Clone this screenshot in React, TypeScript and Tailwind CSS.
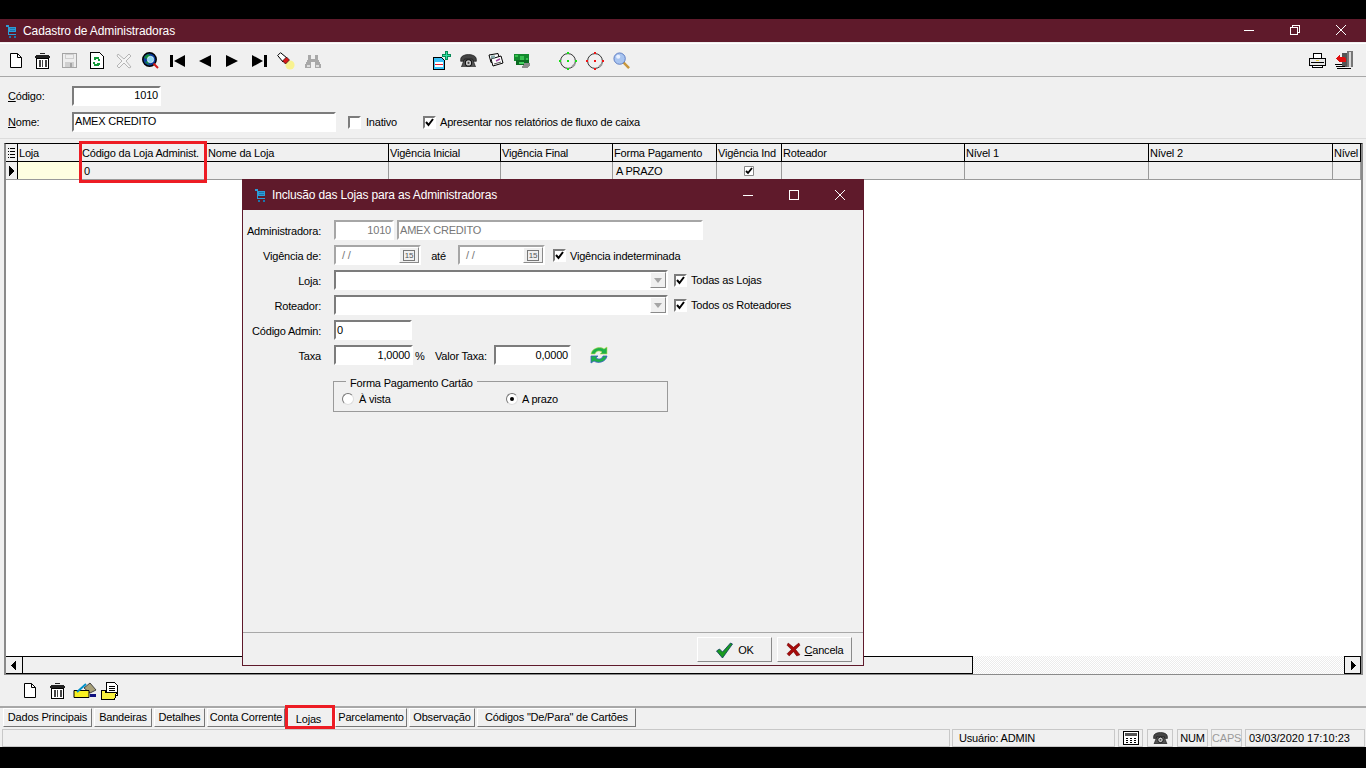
import type { ReactNode } from "react";

const sunken = "border-2 border-t-[#7c7c7c] border-l-[#7c7c7c] border-r-white border-b-white bg-white";
const sunkenOff = "border-2 border-t-[#a6a6a6] border-l-[#a6a6a6] border-r-white border-b-white bg-white";
const raised = "border border-t-white border-l-white border-r-[#8a8a8a] border-b-[#8a8a8a] bg-[#f0f0f0]";

function Px({ w = 20, h = 20, children }: { w?: number; h?: number; children: ReactNode }) {
  return (
    <svg width={w} height={h} viewBox={`0 0 ${w} ${h}`} shapeRendering="crispEdges">
      {children}
    </svg>
  );
}

function Cart() {
  return (
    <Px w={12} h={14}>
      <path d="M1 1h3v2h7v5H4v2h7v1H3V3H1z" fill="#2e9bd6" />
      <path d="M5 4h5v1H5zM5 6h5v1H5z" fill="#1b76ad" />
      <path d="M4 12h2v2H4zM9 12h2v2H9z" fill="#1b76ad" />
    </Px>
  );
}

function NewDoc() {
  return (
    <svg width="12" height="15" viewBox="0 0 12 15">
      <path d="M0.5 0.5h7l4 4v10h-11z" fill="#fff" stroke="#000" />
      <path d="M7.5 0.5v4h4" fill="none" stroke="#000" />
    </svg>
  );
}

function Trash() {
  return (
    <Px w={15} h={16}>
      <path d="M5 0h5v1H5zM1 2h13v1H1zM0 3h15v2H0z" fill="#222" />
      <path d="M1.5 5.5h12v10h-12z" fill="#fff" stroke="#000" />
      <path d="M4 7h2v7H4zM7 7h1v7H7zM10 7h2v7h-2z" fill="#444" />
    </Px>
  );
}

function Save() {
  return (
    <Px w={15} h={15}>
      <path d="M0.5 0.5h14v14h-14z" fill="#eee" stroke="#a5a5a5" />
      <path d="M3 1h9v5H3zM3 9h9v5H3z" fill="#cfcfcf" />
      <path d="M4 2h7v3H4z" fill="#eee" />
      <path d="M8 10h2v4H8z" fill="#a5a5a5" />
    </Px>
  );
}

function Reload() {
  return (
    <Px w={14} h={17}>
      <path d="M0.5 0.5h9l4 4v12h-13z" fill="#fff" stroke="#000" />
      <path d="M4 5h5v2h1v2H8V7H6v1H4zM3 10h2v2h2v-1h3v2H9v1H4v-2H3z" fill="#149a3a" />
    </Px>
  );
}

function CrossOff() {
  return (
    <svg width="16" height="16" viewBox="0 0 16 16">
      <path d="M2 1l6 5 5-5 2 2-5 5 5 6-2 1-5-5-5 5-2-2 5-5-5-5z" fill="#f4f4f4" stroke="#b5b5b5" />
    </svg>
  );
}

function Globe() {
  return (
    <svg width="17" height="17" viewBox="0 0 17 17">
      <circle cx="7.5" cy="7.5" r="6.7" fill="#0b3c9c" stroke="#000" strokeWidth="1.5" />
      <path d="M2 5l4-3 3 2-2 2-3 1zM3 10l3-1 1 4z" fill="#148a3c" />
      <circle cx="8.5" cy="7.5" r="3.2" fill="#8fd8f0" stroke="#fff" strokeWidth="0.6" />
      <path d="M11.5 11.5l4.5 4.5" stroke="#d01818" strokeWidth="2" />
    </svg>
  );
}

function Nav({ dir, bar }: { dir: "l" | "r"; bar?: boolean }) {
  if (dir === "l") {
    return (
      <svg width="16" height="12" viewBox="0 0 16 12">
        {bar && <path d="M0 0h3v12H0z" fill="#000" />}
        <path d={bar ? "M15 0v12L4 6z" : "M14 0v12L2 6z"} fill="#000" />
      </svg>
    );
  }
  return (
    <svg width="16" height="12" viewBox="0 0 16 12">
      <path d={bar ? "M1 0v12l11-6z" : "M2 0v12l12-6z"} fill="#000" />
      {bar && <path d="M13 0h3v12h-3z" fill="#000" />}
    </svg>
  );
}

function Flashlight() {
  return (
    <svg width="18" height="18" viewBox="0 0 18 18">
      <circle cx="13" cy="13" r="4.6" fill="#f8f290" />
      <path d="M0.7 3.5L3.5 0.7 10 6 6 10z" fill="#fff" stroke="#000" />
      <path d="M9.5 5l3 3-4 4-3-3z" fill="#d81818" stroke="#000" strokeWidth="0.6" />
    </svg>
  );
}

function Binoculars() {
  return (
    <Px w={16} h={14}>
      <path d="M3 1h3v4h4V1h3v4l3 6v3h-6V8H6v6H0v-3l3-6z" fill="#a8a8a8" />
      <path d="M2 11h3v2H2zM11 11h3v2h-3z" fill="#dcdcdc" />
    </Px>
  );
}

function DocPlus() {
  return (
    <Px w={19} h={19}>
      <path d="M1.5 6.5h8l3 3v9h-11z" fill="#39c0f6" stroke="#000" />
      <path d="M3 11h8v5H3z" fill="#fff" />
      <path d="M3 13h8v1H3z" fill="#e81c2c" />
      <path d="M13 0h3v3h3v3h-3v3h-3V6h-3V3h3z" fill="#0a8a58" />
      <path d="M14 1h1v3h3v1h-3v3h-1V5h-3V4h3z" fill="#30e0a0" />
    </Px>
  );
}

function Phone({ w = 17 }: { w?: number }) {
  return (
    <svg width={w} height={w * 0.8} viewBox="0 0 16 13">
      <path d="M0.5 5c0-6 15-6 15 0v2h-4V5h-7v2h-4z" fill="#444" stroke="#111" strokeWidth="0.6" />
      <path d="M4 5h8l3 8H1z" fill="#555" stroke="#111" strokeWidth="0.6" />
      <circle cx="8" cy="8.5" r="3" fill="#ccc" stroke="#111" strokeWidth="1" />
      <circle cx="8" cy="8.5" r="1" fill="#444" />
    </svg>
  );
}

function Cards() {
  return (
    <svg width="16" height="15" viewBox="0 0 16 15">
      <path d="M1 2l9-1.500 2 7-9 2z" fill="#fff" stroke="#000" />
      <path d="M3 6l10-3 2 7-10 3z" fill="#fff" stroke="#000" />
      <path d="M3 2.500h4v3H3z" fill="#8aa" />
      <path d="M8 8l4-2" stroke="#a044a0" strokeWidth="1.4" />
      <path d="M6 11l7-2" stroke="#555" />
    </svg>
  );
}

function Money() {
  return (
    <Px w={17} h={14}>
      <path d="M0 0h15v7H0z" fill="#138a2e" />
      <path d="M1 1h3v2H1zM6 2h4v4H6zM12 4h2v2h-2z" fill="#38c050" />
      <path d="M2 6h13v5H2z" fill="#0b6a22" />
      <path d="M5 8h5v2H5z" fill="#46d060" />
      <path d="M10 9h6v2l-3 3H8v-2l2-1z" fill="#8c8c8c" />
    </Px>
  );
}

function Target({ color }: { color: string }) {
  return (
    <svg width="18" height="18" viewBox="0 0 18 18">
      <circle cx="9" cy="9" r="7.4" fill="none" stroke="#333" />
      <path d="M13 15l3-3" stroke="#999" strokeWidth="2" />
      <g fill={color}>
        <rect x="8" y="0" width="2" height="2" />
        <rect x="8" y="16" width="2" height="2" />
        <rect x="0" y="8" width="2" height="2" />
        <rect x="16" y="8" width="2" height="2" />
        <rect x="8" y="8" width="2" height="2" />
      </g>
    </svg>
  );
}

function Magnifier() {
  return (
    <svg width="17" height="17" viewBox="0 0 18 18">
      <path d="M11 11l6 6" stroke="#c8963c" strokeWidth="2.6" />
      <circle cx="7" cy="7" r="6" fill="#a8c4f0" stroke="#5878c0" />
      <circle cx="5.500" cy="5" r="2.200" fill="#e8f0ff" />
    </svg>
  );
}

function Printer() {
  return (
    <Px w={17} h={15}>
      <path d="M4.500 0.500h8v5h-8z" fill="#fff" stroke="#000" />
      <path d="M0.500 5.500h16v7h-16z" fill="#e8e8e8" stroke="#000" />
      <path d="M2 9h13v1H2z" fill="#000" />
      <path d="M7 7h3v1H7z" fill="#e8d040" />
      <path d="M3.500 12.500h10v2h-10z" fill="#fff" stroke="#000" />
    </Px>
  );
}

function ExitDoor() {
  return (
    <Px w={19} h={19}>
      <path d="M7 2h11v14H7z" fill="#555" />
      <path d="M12 0h6v16h-6z" fill="#777" />
      <path d="M14 1h2v15h-2z" fill="#d8d8d8" />
      <path d="M1 7l4-3v2h4l2 2v3H5v1z" fill="#e01010" />
      <path d="M0 13h7v1H0zM1 15h9v1H1zM2 17h14v1H2z" fill="#000" />
    </Px>
  );
}

function Refresh() {
  return (
    <svg width="18" height="18" viewBox="0 0 18 18">
      <path d="M1 8C2 2 10 0 14 3l3-2v7h-7l2-2C9 4 6 5 5 8z" fill="#1eb04a" stroke="#b8e04a" strokeWidth="0.6" />
      <path d="M17 10c-1 6-9 8-13 5l-3 2v-7h7l-2 2c3 2 6 1 7-2z" fill="#1eb04a" stroke="#3c5cc8" strokeWidth="0.8" />
    </svg>
  );
}

function Notes() {
  return (
    <svg width="24" height="17" viewBox="0 0 24 17">
      <path d="M11 6l6-5 6 7-6 3z" fill="#a8a078" stroke="#444" />
      <path d="M1 8.500h15v7H1z" fill="#f8f020" stroke="#000" />
      <path d="M4 10L13 2" stroke="#0090c8" strokeWidth="2" />
      <path d="M17 12h6v3h-6z" fill="#101080" />
    </svg>
  );
}

function FolderDoc() {
  return (
    <svg width="18" height="18" viewBox="0 0 18 18" shapeRendering="crispEdges">
      <path d="M5.500 0.500h8l3 3v10h-11z" fill="#fff" stroke="#000" />
      <path d="M8 4h6v1H8zM8 6h6v1H8zM8 8h6v1H8z" fill="#000" />
      <path d="M0.500 8.500h4v2h11l-2 7h-13z" fill="#f8f040" stroke="#000" />
    </svg>
  );
}

function Calc() {
  return (
    <Px w={16} h={14}>
      <path d="M0.500 0.500h15v13h-15z" fill="#fff" stroke="#000" />
      <path d="M2 2h12v3H2z" fill="#555" />
      <path d="M3 7h2v1H3zM7 7h2v1H7zM11 7h2v1h-2zM3 9h2v1H3zM7 9h2v1H7zM11 9h2v1h-2zM3 11h2v1H3zM7 11h2v1H7zM11 11h2v1h-2z" fill="#000" />
    </Px>
  );
}

function Check({ on = true, size = 13 }: { on?: boolean; size?: number }) {
  return (
    <span className={`${sunken} flex shrink-0 items-center justify-center`} style={{ width: size, height: size }}>
      {on && (
        <svg width="9" height="9" viewBox="0 0 9 9">
          <path d="M1 4l2.500 3L8 1" fill="none" stroke="#000" strokeWidth="2" />
        </svg>
      )}
    </span>
  );
}

function Radio({ on }: { on?: boolean }) {
  return (
    <span className="flex h-3 w-3 shrink-0 items-center justify-center rounded-full border border-t-[#777] border-l-[#777] border-r-[#ddd] border-b-[#ddd] bg-white">
      {on && <span className="h-1 w-1 rounded-full bg-black" />}
    </span>
  );
}

function Slot({ children }: { children: ReactNode }) {
  return <span className="flex h-full w-[27px] shrink-0 items-center justify-center">{children}</span>;
}

function WinButton({ kind }: { kind: "min" | "max" | "restore" | "close" }) {
  return (
    <span className="flex h-full w-[46px] items-center justify-center">
      <svg width="12" height="12" viewBox="0 0 12 12" fill="none" stroke="#fff" shapeRendering={kind === "close" ? "auto" : "crispEdges"}>
        {kind === "min" && <path d="M1 6.500h10" />}
        {kind === "max" && <path d="M1.500 1.500h9v9h-9z" />}
        {kind === "restore" && <path d="M1.500 3.500h7v7h-7zM3.500 3.500v-2h7v7h-2" />}
        {kind === "close" && <path d="M1 1l10 10M11 1L1 11" />}
      </svg>
    </span>
  );
}

const columns = [
  { label: "Loja", w: "w-[63px]", cell: "bg-[#ffffe1]", value: "" },
  { label: "Código da Loja Administ.", w: "w-[126px]", cell: "", value: "0" },
  { label: "Nome da Loja", w: "w-[182px]", cell: "", value: "" },
  { label: "Vigência Inicial", w: "w-[112px]", cell: "", value: "" },
  { label: "Vigência Final", w: "w-[112px]", cell: "", value: "" },
  { label: "Forma Pagamento", w: "w-[104px]", cell: "", value: "A PRAZO" },
  { label: "Vigência Ind", w: "w-[65px]", cell: "", value: "check" },
  { label: "Roteador", w: "w-[183px]", cell: "", value: "" },
  { label: "Nível 1", w: "w-[184px]", cell: "", value: "" },
  { label: "Nível 2", w: "w-[184px]", cell: "", value: "" },
  { label: "Nível", w: "w-[28px]", cell: "", value: "" },
];

const tabs = [
  { label: "Dados Principais", w: "w-[89px]" },
  { label: "Bandeiras", w: "w-[58px]" },
  { label: "Detalhes", w: "w-[51px]" },
  { label: "Conta Corrente", w: "w-[78px]" },
  { label: "Lojas", w: "w-[46px]", active: true },
  { label: "Parcelamento", w: "w-[72px]" },
  { label: "Observação", w: "w-[66px]" },
  { label: 'Códigos "De/Para" de Cartões', w: "w-[159px]" },
];

function Grid() {
  return (
    <div className="ml-[4px] mr-[3px] mt-[4px] flex h-[532px] shrink-0 flex-col border-x-2 border-t border-b border-t-black border-l-[#8a8a8a] border-r-[#8a8a8a] border-b-[#8a8a8a] bg-white">
      <div className="flex h-[18px] shrink-0 overflow-hidden border-b border-black bg-[#f0f0f0]">
        <span className="flex w-[12px] shrink-0 items-center justify-center border-r border-black">
          <svg width="7" height="11" viewBox="0 0 7 11" shapeRendering="crispEdges">
            <path d="M0 1h1v1H0zM2 1h5v1H2zM0 4h1v1H0zM2 4h5v1H2zM0 7h1v1H0zM2 7h5v1H2zM0 10h1v1H0zM2 10h5v1H2z" fill="#000" />
          </svg>
        </span>
        {columns.map((c) => (
          <span key={c.label} className={`${c.w} shrink-0 overflow-hidden whitespace-nowrap border-r border-black pl-[1px] pt-[1px] leading-[17px]`}>
            {c.label}
          </span>
        ))}
      </div>
      <div className="flex h-[18px] shrink-0 overflow-hidden border-b border-[#9a9a9a] bg-[#f0f0f0]">
        <span className="flex w-[12px] shrink-0 items-center justify-center border-r border-black">
          <svg width="6" height="10" viewBox="0 0 6 10" shapeRendering="crispEdges">
            <path d="M0 0l6 5-6 5z" fill="#000" />
          </svg>
        </span>
        {columns.map((c) => (
          <span key={c.label} className={`${c.w} ${c.cell} flex shrink-0 items-center border-r border-[#9a9a9a] pl-[3px] pt-[1px]`}>
            {c.value === "check" ? (
              <span className="flex w-full justify-center pr-[3px]">
                <svg width="10" height="10" viewBox="0 0 10 10">
                  <path d="M0.500 0.500h9v9h-9z" fill="#fff" stroke="#8a8a8a" />
                  <path d="M2 5l2 2 4-5" fill="none" stroke="#000" strokeWidth="1.800" />
                </svg>
              </span>
            ) : (
              c.value
            )}
          </span>
        ))}
      </div>
      <div className="flex-1" />
      <div className="flex h-[18px] shrink-0 bg-[repeating-conic-gradient(#ececec_0_25%,#ffffff_0_50%)] bg-[length:2px_2px]">
        <span className="flex w-[17px] items-center justify-center border-y border-r border-black bg-[#f0f0f0]">
          <svg width="6" height="9" viewBox="0 0 6 9" shapeRendering="crispEdges">
            <path d="M5 0v9L0 4.500z" fill="#000" />
          </svg>
        </span>
        <span className="w-[950px] border-y border-r border-black bg-[#f0f0f0]" />
        <span className="flex-1" />
        <span className="flex w-[17px] items-center justify-center border border-black bg-[#f0f0f0]">
          <svg width="6" height="9" viewBox="0 0 6 9" shapeRendering="crispEdges">
            <path d="M1 0v9l5-4.500z" fill="#000" />
          </svg>
        </span>
      </div>
    </div>
  );
}

function DialogRow({ label, children }: { label: string; children: ReactNode }) {
  return (
    <div className="flex h-[20px] items-center">
      <span className="w-[78px] shrink-0 whitespace-nowrap pt-[2px] text-right">{label}</span>
      <span className="w-[13px] shrink-0" />
      {children}
    </div>
  );
}

function DateInput() {
  return (
    <span className={`${sunkenOff} flex h-[20px] w-[87px] shrink-0 items-center justify-between pl-[6px] text-[#777]`}>
      <span>/ /</span>
      <span className={`${raised} flex h-[16px] w-[20px] items-center justify-center`}>
        <span className="border border-[#777] px-[1px] text-[8px] leading-[9px] text-[#555]">15</span>
      </span>
    </span>
  );
}

function Combo() {
  return (
    <span className={`${sunken} flex h-[20px] w-[334px] shrink-0 justify-end`}>
      <span className={`${raised} flex w-[16px] items-center justify-center`}>
        <svg width="8" height="5" viewBox="0 0 8 5">
          <path d="M0 0h8L4 5z" fill="#a5a5a5" />
        </svg>
      </span>
    </span>
  );
}

function Dialog() {
  return (
    <div className="absolute left-[242px] top-[179px] flex h-[487px] w-[622px] flex-col border border-[#5f1a2b] bg-[#f0f0f0]">
      <div className="flex h-[30px] shrink-0 items-center bg-[#5f1a2b] pl-[11px] text-[12px] tracking-[-0.17px] text-white">
        <Cart />
        <span className="ml-[6px]">Inclusão das Lojas para as Administradoras</span>
        <span className="ml-auto flex h-full items-center">
          <WinButton kind="min" />
          <WinButton kind="max" />
          <WinButton kind="close" />
        </span>
      </div>
      <div className="flex flex-1 flex-col pt-[10px]">
        <div className="flex flex-col gap-[5px]">
          <DialogRow label="Administradora:">
            <span className={`${sunkenOff} h-[20px] w-[60px] pr-[1px] text-right leading-[16px] text-[#777]`}>1010</span>
            <span className={`${sunkenOff} ml-[3px] h-[20px] w-[306px] pl-[1px] leading-[16px] text-[#777]`}>AMEX CREDITO</span>
          </DialogRow>
          <DialogRow label="Vigência de:">
            <DateInput />
            <span className="w-[37px] pt-[2px] pr-[2px] text-center">até</span>
            <DateInput />
            <span className="ml-[8px]">
              <Check />
            </span>
            <span className="ml-[4px] pt-[2px]">Vigência indeterminada</span>
          </DialogRow>
          <DialogRow label="Loja:">
            <Combo />
            <span className="ml-[6px]">
              <Check />
            </span>
            <span className="ml-[4px] pt-[1px]">Todas as Lojas</span>
          </DialogRow>
          <DialogRow label="Roteador:">
            <Combo />
            <span className="ml-[6px]">
              <Check />
            </span>
            <span className="ml-[4px] pt-[1px]">Todos os Roteadores</span>
          </DialogRow>
          <DialogRow label="Código Admin:">
            <span className={`${sunken} h-[20px] w-[78px] pl-[1px] leading-[16px]`}>0</span>
          </DialogRow>
          <DialogRow label="Taxa">
            <span className={`${sunken} h-[20px] w-[79px] pr-[1px] text-right leading-[16px]`}>1,0000</span>
            <span className="ml-[2px] w-[20px] pt-[2px]">%</span>
            <span className="w-[59px] whitespace-nowrap pt-[2px]">Valor Taxa:</span>
            <span className={`${sunken} h-[20px] w-[77px] pr-[1px] text-right leading-[16px]`}>0,0000</span>
            <span className="ml-[19px]">
              <Refresh />
            </span>
          </DialogRow>
        </div>
        <div className="relative ml-[90px] mt-[16px] flex h-[31px] w-[335px] items-end border border-[#9a9a9a] pb-[4px] pl-[8px]">
          <span className="absolute left-[12px] top-[-6px] bg-[#f0f0f0] px-[4px] leading-[14px]">Forma Pagamento Cartão</span>
          <span className="flex w-[164px] items-center gap-[5px]">
            <Radio />À vista
          </span>
          <span className="flex items-center gap-[4px]">
            <Radio on />A prazo
          </span>
        </div>
      </div>
      <div className="flex h-[33px] shrink-0 items-start justify-end gap-[5px] border-t border-[#a8a8a8] pr-[11px] pt-[4px]">
        <button className={`${raised} flex h-[25px] w-[75px] items-center justify-center gap-[4px]`}>
          <svg width="19" height="16" viewBox="0 0 18 16">
            <path d="M1 9l3-2 3 3 8-9 2 1-10 14z" fill="#1a9a20" stroke="#0a3a60" strokeWidth="0.800" />
          </svg>
          <span className="pt-[1px]">OK</span>
        </button>
        <button className={`${raised} flex h-[25px] w-[75px] items-center justify-center gap-[4px]`}>
          <svg width="15" height="15" viewBox="0 0 14 14">
            <path d="M2 1l5 4 5-4 1 2-4 4 4 5-3 1-3-4-4 4-2-2 4-4-4-4z" fill="#a80c0c" stroke="#600" strokeWidth="0.500" />
          </svg>
          <span className="pt-[1px]">
            <span className="underline">C</span>ancela
          </span>
        </button>
      </div>
    </div>
  );
}

export default function App() {
  return (
    <div className="relative h-[768px] w-[1366px] overflow-hidden bg-black pt-[19px] font-['Liberation_Sans',sans-serif] text-[11px] tracking-[-0.2px] text-black">
      <div className="flex h-[728px] flex-col bg-[#f0f0f0]">
        <div className="flex h-[23px] shrink-0 items-center bg-[#5f1a2b] pl-[5px] text-[12px] tracking-[-0.1px] text-white">
          <Cart />
          <span className="ml-[6px] pt-[1px]">Cadastro de Administradoras</span>
          <span className="ml-auto flex h-full items-center pb-[2px] pr-[2px]">
            <WinButton kind="min" />
            <WinButton kind="restore" />
            <WinButton kind="close" />
          </span>
        </div>

        <div className="mt-[1px] flex h-[34px] shrink-0 items-center border-y border-t-white border-b-[#a8a8a8] pl-[2px] pr-[8px] pt-[1px]">
          <Slot><NewDoc /></Slot>
          <Slot><Trash /></Slot>
          <Slot><Save /></Slot>
          <Slot><Reload /></Slot>
          <Slot><CrossOff /></Slot>
          <Slot><Globe /></Slot>
          <Slot><Nav dir="l" bar /></Slot>
          <Slot><Nav dir="l" /></Slot>
          <Slot><Nav dir="r" /></Slot>
          <Slot><Nav dir="r" bar /></Slot>
          <Slot><Flashlight /></Slot>
          <Slot><Binoculars /></Slot>
          <span className="w-[102px] shrink-0" />
          <Slot><DocPlus /></Slot>
          <Slot><Phone /></Slot>
          <Slot><Cards /></Slot>
          <Slot><Money /></Slot>
          <span className="w-[18px] shrink-0" />
          <Slot><Target color="#14e014" /></Slot>
          <Slot><Target color="#f01414" /></Slot>
          <Slot><Magnifier /></Slot>
          <span className="ml-auto flex h-full items-center">
            <Slot><Printer /></Slot>
            <Slot><ExitDoor /></Slot>
          </span>
        </div>

        <div className="flex h-[62px] shrink-0 flex-col gap-[6px] border-b border-[#dcdcdc] pl-[8px] pt-[9px]">
          <div className="flex h-[20px] items-center">
            <span className="w-[64px]">
              <span className="underline">C</span>ódigo:
            </span>
            <span className={`${sunken} h-[20px] w-[89px] pr-[1px] text-right leading-[14px]`}>1010</span>
          </div>
          <div className="flex h-[20px] items-center">
            <span className="w-[64px]">
              <span className="underline">N</span>ome:
            </span>
            <span className={`${sunken} h-[20px] w-[264px] pl-[1px] leading-[14px]`}>AMEX CREDITO</span>
            <span className="ml-[12px]">
              <Check on={false} />
            </span>
            <span className="ml-[5px] w-[57px]">Inativo</span>
            <Check />
            <span className="ml-[4px]">Apresentar nos relatórios de fluxo de caixa</span>
          </div>
        </div>

        <Grid />

        <div className="flex h-[31px] shrink-0 items-center pl-[16px]">
          <Slot><NewDoc /></Slot>
          <span className="flex w-[29px] justify-center"><Trash /></span>
          <span className="flex w-[25px] justify-center"><Notes /></span>
          <span className="flex w-[26px] justify-center"><FolderDoc /></span>
        </div>

        <div className="flex h-[23px] shrink-0 items-start gap-[2px] border-t-2 border-t-[#a8a8a8] pl-[3px]">
          {tabs.map((t) => (
            <span
              key={t.label}
              className={`${t.w} h-[19px] shrink-0 whitespace-nowrap text-center ${
                t.active
                  ? "pt-[3px] pr-[3px] leading-[16px]"
                  : "border border-t-white border-l-white border-r-[#777] border-b-[#777] leading-[16px]"
              }`}
            >
              {t.label}
            </span>
          ))}
        </div>

        <div className="flex h-[18px] shrink-0 pl-[2px]">
          <span className="w-[948px] border border-[#c8c8c8]" />
          <span className="ml-[2px] w-[163px] border border-[#c8c8c8] pl-[6px] leading-[16px]">Usuário: ADMIN</span>
          <span className="ml-[3px] flex w-[25px] items-center justify-center border border-[#c8c8c8]"><Calc /></span>
          <span className="ml-[4px] flex w-[26px] items-center justify-center border border-[#c8c8c8]"><Phone w={15} /></span>
          <span className="ml-[4px] w-[31px] border border-[#c8c8c8] text-center leading-[16px]">NUM</span>
          <span className="ml-[3px] w-[31px] border border-[#c8c8c8] text-center leading-[16px] text-[#9a9a9a]">CAPS</span>
          <span className="ml-[3px] w-[120px] whitespace-nowrap border border-[#c8c8c8] pl-[3px] leading-[16px] tracking-[0px]">03/03/2020 17:10:23</span>
        </div>
      </div>

      <Dialog />

      <div className="absolute left-[79px] top-[141px] h-[42px] w-[128px] border-[3px] border-[#ed1c24]" />
      <div className="absolute left-[285px] top-[705px] h-[24px] w-[50px] border-[3px] border-[#ed1c24]" />
    </div>
  );
}
